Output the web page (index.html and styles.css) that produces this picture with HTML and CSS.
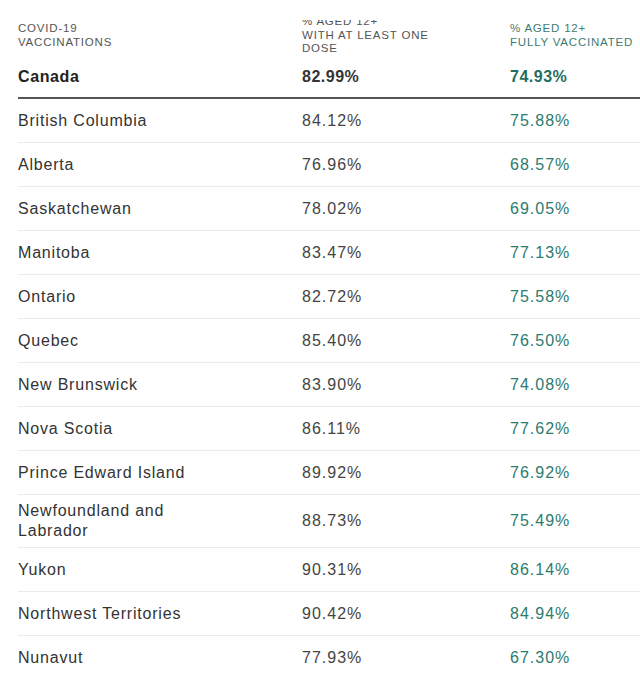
FILE: index.html
```html
<!DOCTYPE html>
<html lang="en">
<head>
<meta charset="utf-8">
<title>COVID-19 vaccinations</title>
<link rel="stylesheet" href="styles.css">
</head>
<body>
<main class="table">
  <div class="row head">
    <div class="name">COVID-19<br>VACCINATIONS</div>
    <div>% AGED 12+<br>WITH AT LEAST ONE<br>DOSE</div>
    <div class="full-h">% AGED 12+<br>FULLY VACCINATED</div>
  </div>
  <div class="row total">
    <div class="name">Canada</div>
    <div class="num">82.99%</div>
    <div class="num full">74.93%</div>
  </div>
  <div class="row"><div class="name">British Columbia</div><div class="num">84.12%</div><div class="num full">75.88%</div></div>
  <div class="row"><div class="name">Alberta</div><div class="num">76.96%</div><div class="num full">68.57%</div></div>
  <div class="row"><div class="name">Saskatchewan</div><div class="num">78.02%</div><div class="num full">69.05%</div></div>
  <div class="row"><div class="name">Manitoba</div><div class="num">83.47%</div><div class="num full">77.13%</div></div>
  <div class="row"><div class="name">Ontario</div><div class="num">82.72%</div><div class="num full">75.58%</div></div>
  <div class="row"><div class="name">Quebec</div><div class="num">85.40%</div><div class="num full">76.50%</div></div>
  <div class="row"><div class="name">New Brunswick</div><div class="num">83.90%</div><div class="num full">74.08%</div></div>
  <div class="row"><div class="name">Nova Scotia</div><div class="num">86.11%</div><div class="num full">77.62%</div></div>
  <div class="row"><div class="name">Prince Edward Island</div><div class="num">89.92%</div><div class="num full">76.92%</div></div>
  <div class="row"><div class="name">Newfoundland and Labrador</div><div class="num">88.73%</div><div class="num full">75.49%</div></div>
  <div class="row"><div class="name">Yukon</div><div class="num">90.31%</div><div class="num full">86.14%</div></div>
  <div class="row"><div class="name">Northwest Territories</div><div class="num">90.42%</div><div class="num full">84.94%</div></div>
  <div class="row"><div class="name">Nunavut</div><div class="num">77.93%</div><div class="num full">67.30%</div></div>
</main>
</body>
</html>
```
FILE: styles.css
```css
html, body {
  margin: 0;
  background: #ffffff;
}
body {
  font-family: "Liberation Sans", Arial, Helvetica, sans-serif;
  color: #333333;
  overflow: hidden;
}
.table {
  margin: 20px 0 0 18px;
  overflow: hidden;
}
.row {
  display: grid;
  grid-template-columns: 284px 208px 1fr;
  align-items: center;
  box-sizing: border-box;
  min-height: 44px;
  padding: 6px 0;
  border-bottom: 1px solid #ebebeb;
  font-size: 16px;
  line-height: 20px;
}
.row:last-child {
  border-bottom: none;
}
.name {
  padding-right: 90px;
  letter-spacing: 0.8px;
}
.num {
  letter-spacing: 1px;
  color: #444444;
}
.full {
  color: #2c7b6e;
}
.head {
  margin-top: -5px;
  min-height: 41px;
  padding: 0;
  border: none;
  font-size: 11.5px;
  line-height: 13.5px;
  letter-spacing: 0.8px;
  color: #555555;
}
.head .name {
  letter-spacing: 0.8px;
}
.head .full-h {
  color: #3f7b72;
  white-space: nowrap;
}
.total {
  min-height: 43px;
  border-bottom: 2px solid #555555;
  font-weight: bold;
}
.total .name {
  color: #222222;
  letter-spacing: 0.6px;
}
.total .num {
  letter-spacing: 0.5px;
  color: #333333;
}
.total .full {
  color: #226e62;
}
```
